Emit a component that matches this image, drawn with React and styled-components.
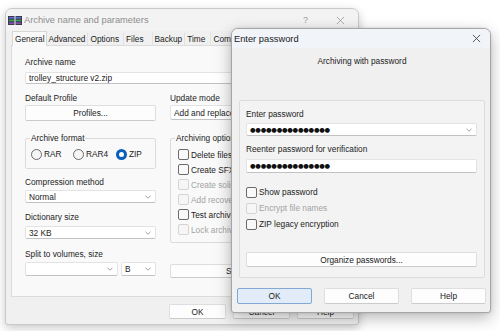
import React from 'react';
import styled, { createGlobalStyle } from 'styled-components';

const GlobalStyle = createGlobalStyle`
  html, body {
    margin: 0;
    padding: 0;
    background: #ffffff;
  }
  body {
    font-family: "Liberation Sans", Arial, sans-serif;
    font-size: 8.3px;
    color: #1b1b1b;
  }
  * {
    box-sizing: border-box;
  }
`

const Desktop = styled.div`
  position: relative;
  width: 500px;
  height: 331px;
  overflow: hidden;
  background: #ffffff;
`

// windows sit on a free desktop canvas, so they are placed by coordinates
const Window = styled.div`
  position: absolute;
  z-index: ${p => p.$z};
  left: ${p => p.$x}px;
  top: ${p => p.$y}px;
  width: ${p => p.$w}px;
  height: ${p => p.$h}px;
  display: flex;
  flex-direction: column;
  background: #f0f0f0;
  border: 1px solid ${p => (p.$active ? '#a6a6a6' : '#c9c9c9')};
  border-radius: 7px 7px 3px 3px;
  box-shadow: ${p => (p.$active
    ? '0 5px 16px rgba(0,0,0,0.28), 0 0 3px rgba(0,0,0,0.12)'
    : '0 3px 10px rgba(0,0,0,0.22)')};
  overflow: hidden;
`

const TitleBar = styled.div`
  flex: none;
  height: ${p => p.$h}px;
  display: flex;
  align-items: center;
  padding-left: ${p => p.$pad}px;
  background: ${p => (p.$active ? '#f1f5fa' : '#f3f3f3')};
`

const TitleText = styled.span`
  flex: 1;
  font-size: 9.3px;
  color: ${p => (p.$active ? '#1a1a1a' : '#8d8d8d')};
  white-space: nowrap;
`

const CaptionButton = styled.div`
  flex: none;
  width: ${p => p.$w}px;
  height: 100%;
  display: flex;
  align-items: center;
  justify-content: center;
  color: #9a9a9a;
  font-size: 9px;
`

const AppIcon = styled.svg`
  flex: none;
  margin-right: 2px;
`

const TabStrip = styled.div`
  flex: none;
  height: 14px;
  display: flex;
  align-items: flex-end;
  padding-left: 6px;
  position: relative;
  z-index: 1;
`

const Tab = styled.div`
  height: ${p => (p.$selected ? 15 : 13)}px;
  margin-bottom: ${p => (p.$selected ? -1 : 0)}px;
  padding: 0 ${p => p.$padR ?? 1}px 0 ${p => (p.$selected ? 2 : 1)}px;
  display: flex;
  align-items: center;
  white-space: nowrap;
  color: #1b1b1b;
  background: ${p => (p.$selected ? '#f9f9f9' : 'transparent')};
  border: 1px solid ${p => (p.$selected ? '#d6d6d6' : 'transparent')};
  border-bottom: none;
  border-right-color: ${p => (p.$selected ? '#d6d6d6' : '#e2e2e2')};
`

const TabPanel = styled.div`
  flex: none;
  height: 252px;
  margin: 0 5px;
  padding: 11px 13px;
  background: #f9f9f9;
  border: 1px solid #dcdcdc;
`

const Footer = styled.div`
  flex: none;
  display: flex;
  justify-content: flex-end;
  gap: 7px;
  padding: 7px 4px 0 0;
`

const Label = styled.div`
  height: 11px;
  line-height: 11px;
  margin-top: ${p => p.$mt ?? 0}px;
  white-space: nowrap;
  text-align: ${p => (p.$center ? 'center' : 'left')};
`

const Field = styled.div`
  height: ${p => p.$h ?? 13}px;
  margin-top: ${p => p.$mt ?? 0}px;
  width: ${p => (p.$w ? `${p.$w}px` : 'auto')};
  display: flex;
  align-items: center;
  padding: 0 4px 0 3px;
  background: #ffffff;
  border: 1px solid #e3e3e3;
  border-bottom-color: #c2c2c2;
  border-radius: 2px;
  white-space: nowrap;
  overflow: hidden;
`

const FieldText = styled.span`
  flex: 1;
  overflow: hidden;
`

const Dots = styled.span`
  flex: 1;
  font-family: "DejaVu Sans", sans-serif;
  font-size: 6.4px;
  letter-spacing: -0.25px;
  color: #111;
`

const Chevron = () => (
  <svg width="6" height="4" viewBox="0 0 6 4" style={{ flex: 'none' }}>
    <path d="M0.5 0.8 L3 3.2 L5.5 0.8" fill="none" stroke="#8a8a8a" strokeWidth="0.8" />
  </svg>
)

const Button = styled.div`
  height: ${p => p.$h ?? 16}px;
  width: ${p => (p.$w ? `${p.$w}px` : 'auto')};
  margin-top: ${p => p.$mt ?? 0}px;
  display: flex;
  align-items: center;
  justify-content: center;
  white-space: nowrap;
  overflow: hidden;
  background: ${p => (p.$primary ? '#e1ecf8' : '#fdfdfd')};
  border: 1px solid ${p => (p.$primary ? '#80a9d6' : '#dedede')};
  border-bottom-color: ${p => (p.$primary ? '#80a9d6' : '#cbcbcb')};
  border-radius: 2px;
  color: #1b1b1b;
`

const Columns = styled.div`
  display: grid;
  grid-template-columns: 131px 1fr;
  column-gap: 14px;
  margin-top: 9px;
`

const Column = styled.div`
  display: flex;
  flex-direction: column;
  min-width: 0;
`

const Group = styled.fieldset`
  margin: ${p => p.$mt ?? 0}px 0 0 0;
  padding: ${p => p.$pt ?? 3}px 6px ${p => p.$pb ?? 5}px 7px;
  border: 1px solid #dcdcdc;
  border-radius: 2px;
  min-width: 0;
`

const Legend = styled.legend`
  margin-left: -3px;
  padding: 0 1px;
  height: 11px;
  line-height: 11px;
  white-space: nowrap;
`

const RadioRow = styled.div`
  display: grid;
  grid-template-columns: 42px 43px auto;
  margin-left: -2px;
  height: 12px;
  align-items: center;
`

const Choice = styled.div`
  display: flex;
  align-items: center;
  gap: 2px;
  height: ${p => p.$h ?? 15}px;
  white-space: nowrap;
  color: ${p => (p.$disabled ? '#a3a3a3' : '#1b1b1b')};
`

const RadioDot = styled.span`
  flex: none;
  width: 11px;
  height: 11px;
  border-radius: 50%;
  background: ${p => (p.$on ? '#ffffff' : '#f6f6f6')};
  border: ${p => (p.$on ? '3px solid #0a5fb8' : '1px solid #6b6b6b')};
`

const Box = styled.span`
  flex: none;
  width: 11px;
  height: 11px;
  border-radius: 2px;
  background: ${p => (p.$disabled ? '#f6f6f6' : '#f9f9f9')};
  border: 1px solid ${p => (p.$disabled ? '#d4d4d4' : '#6b6b6b')};
`

const SplitRow = styled.div`
  display: flex;
  gap: 3px;
  margin-top: 2px;
`

const DialogBody = styled.div`
  flex: 1;
  display: flex;
  flex-direction: column;
  padding: 8px 5px 9px 7px;
`

const PasswordGroup = styled.div`
  margin-top: 33px;
  height: 178px;
  padding: 8px 7px 10px 6px;
  display: flex;
  flex-direction: column;
  background: #f3f3f3;
  border: 1px solid #dcdcdc;
  border-radius: 2px;
`

const CheckList = styled.div`
  display: flex;
  flex-direction: column;
  margin-top: ${p => p.$mt ?? 0}px;
`

const DialogButtons = styled.div`
  display: grid;
  grid-template-columns: repeat(3, 1fr);
  column-gap: 12px;
  margin: 10px -1px 0 -2px;
`

const CloseIcon = ({ color = '#7a7a7a', size = 9 }) => (
  <svg width={size} height={size} viewBox="0 0 10 10">
    <path d="M1 1 L9 9 M9 1 L1 9" stroke={color} strokeWidth="0.9" fill="none" />
  </svg>
)

const Check = ({ label, disabled, h }) => (
  <Choice $disabled={disabled} $h={h}>
    <Box $disabled={disabled} />
    {label}
  </Choice>
)

const Radio = ({ label, on }) => (
  <Choice $h={12}>
    <RadioDot $on={on} />
    {label}
  </Choice>
)

const Select = ({ children, ...rest }) => (
  <Field {...rest}>
    <FieldText>{children}</FieldText>
    <Chevron />
  </Field>
)

const tabs = [
  { name: 'General' },
  { name: 'Advanced', padR: 2 },
  { name: 'Options', padR: 4 },
  { name: 'Files', padR: 8 },
  { name: 'Backup', padR: 2 },
  { name: 'Time', padR: 5 },
  { name: 'Comment' },
]
const dots = '●●●●●●●●●●●●●●●'

const ArchiveWindow = () => (
  <Window $x={5} $y={8} $w={354} $h={317} $z={1}>
    <TitleBar $h={22} $pad={2}>
      <AppIcon width="14" height="9" viewBox="0 0 14 9">
        <rect x="0" y="0" width="14" height="9" fill="#3a3a4a" />
        <rect x="1" y="1" width="12" height="1.5" fill="#5b6fd6" />
        <rect x="1" y="3.7" width="12" height="1.5" fill="#3aa85a" />
        <rect x="1" y="6.4" width="12" height="1.5" fill="#8a54b8" />
        <rect x="6" y="0" width="2" height="9" fill="#9aa0a8" />
      </AppIcon>
      <TitleText>Archive name and parameters</TitleText>
      <CaptionButton $w={35}>?</CaptionButton>
      <CaptionButton $w={35}><CloseIcon color="#9a9a9a" /></CaptionButton>
    </TitleBar>
    <TabStrip>
      {tabs.map((t, i) => (
        <Tab key={t.name} $selected={i === 0} $padR={t.padR}>{t.name}</Tab>
      ))}
    </TabStrip>
    <TabPanel>
      <Label>Archive name</Label>
      <Field $mt={4} $h={12}><FieldText>trolley_structure v2.zip</FieldText></Field>
      <Columns>
        <Column>
          <Label>Default Profile</Label>
          <Button $mt={1} $h={16}>Profiles...</Button>
          <Group $mt={12} $pt={4} $pb={8}>
            <Legend>Archive format</Legend>
            <RadioRow>
              <Radio label="RAR" />
              <Radio label="RAR4" />
              <Radio label="ZIP" on />
            </RadioRow>
          </Group>
          <Label $mt={8}>Compression method</Label>
          <Select $mt={2}>Normal</Select>
          <Label $mt={9}>Dictionary size</Label>
          <Select $mt={3}>32 KB</Select>
          <Label $mt={10}>Split to volumes, size</Label>
          <SplitRow>
            <Select $w={93} $h={14}></Select>
            <Select $w={35} $h={14}>B</Select>
          </SplitRow>
        </Column>
        <Column>
          <Label>Update mode</Label>
          <Select $mt={1} $h={15}>Add and replace files</Select>
          <Group $mt={13} $pt={3} $pb={5}>
            <Legend>Archiving options</Legend>
            <CheckList>
              <Check label="Delete files after archiving" />
              <Check label="Create SFX archive" />
              <Check label="Create solid archive" disabled />
              <Check label="Add recovery record" disabled />
              <Check label="Test archived files" />
              <Check label="Lock archive" disabled />
            </CheckList>
          </Group>
          <Button $mt={21} $h={14}>Set password...</Button>
        </Column>
      </Columns>
    </TabPanel>
    <Footer>
      <Button $w={57} $h={15}>OK</Button>
      <Button $w={57} $h={15}>Cancel</Button>
      <Button $w={57} $h={15}>Help</Button>
    </Footer>
  </Window>
)

const PasswordDialog = () => (
  <Window $x={231} $y={28} $w={260} $h={285} $z={2} $active>
    <TitleBar $h={19} $pad={2} $active>
      <TitleText $active>Enter password</TitleText>
      <CaptionButton $w={28}><CloseIcon color="#333" /></CaptionButton>
    </TitleBar>
    <DialogBody>
      <Label $center>Archiving with password</Label>
      <PasswordGroup>
        <Label>Enter password</Label>
        <Field $mt={3} $h={13}>
          <Dots>{dots}</Dots>
          <Chevron />
        </Field>
        <Label $mt={8}>Reenter password for verification</Label>
        <Field $mt={4} $h={14}>
          <Dots>{dots}</Dots>
        </Field>
        <CheckList $mt={11}>
          <Check label="Show password" h={16} />
          <Check label="Encrypt file names" disabled h={16} />
          <Check label="ZIP legacy encryption" h={16} />
        </CheckList>
        <Button $mt={20} $h={15}>Organize passwords...</Button>
      </PasswordGroup>
      <DialogButtons>
        <Button $primary>OK</Button>
        <Button>Cancel</Button>
        <Button>Help</Button>
      </DialogButtons>
    </DialogBody>
  </Window>
)

const App = () => (
  <>
    <GlobalStyle />
    <Desktop>
      <ArchiveWindow />
      <PasswordDialog />
    </Desktop>
  </>
)

export default App
